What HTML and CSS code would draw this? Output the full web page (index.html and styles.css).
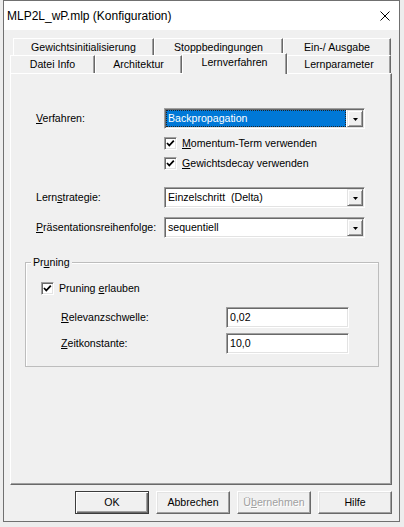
FILE: index.html
```html
<!DOCTYPE html>
<html lang="de">
<head>
<meta charset="utf-8">
<title>MLP2L_wP.mlp (Konfiguration)</title>
<link rel="stylesheet" href="styles.css">
</head>
<body>
<div class="window">
  <div class="titlebar">
    <span class="title">MLP2L_wP.mlp (Konfiguration)</span>
    <svg class="close" viewBox="0 0 10 10" width="10" height="10"><path d="M0.5 0.5 L9.5 9.5 M9.5 0.5 L0.5 9.5" stroke="#000" stroke-width="1" fill="none"/></svg>
  </div>
  <div class="content">
    <div class="tabs">
      <div class="tabrow back">
        <div class="tab t1">Gewichtsinitialisierung</div>
        <div class="tab t2">Stoppbedingungen</div>
        <div class="tab t3">Ein-/ Ausgabe</div>
      </div>
      <div class="tabrow front">
        <div class="tab t4">Datei Info</div>
        <div class="tab t5">Architektur</div>
        <div class="tab t6 sel">Lernverfahren</div>
        <div class="tab t7">Lernparameter</div>
      </div>
    </div>
    <div class="panel">
      <div class="row r1">
        <span class="lbl"><u>V</u>erfahren:</span>
        <div class="combo sunken">
          <div class="cval selected">Backpropagation</div>
          <div class="dd"><svg viewBox="0 0 5 3" width="5" height="3"><polygon points="0,0 5,0 2.5,3" fill="#000"/></svg></div>
        </div>
      </div>
      <div class="checks">
        <div class="check c1">
          <span class="box sunken"><svg viewBox="0 0 9 9" width="9" height="9"><polyline points="1,4 3.3,6.5 7.8,1.6" fill="none" stroke="#000" stroke-width="1.8"/></svg></span>
          <span><u>M</u>omentum-Term verwenden</span>
        </div>
        <div class="check c2">
          <span class="box sunken"><svg viewBox="0 0 9 9" width="9" height="9"><polyline points="1,4 3.3,6.5 7.8,1.6" fill="none" stroke="#000" stroke-width="1.8"/></svg></span>
          <span><u>G</u>ewichtsdecay verwenden</span>
        </div>
      </div>
      <div class="row r2">
        <span class="lbl">Lern<u>s</u>trategie:</span>
        <div class="combo sunken">
          <div class="cval">Einzelschritt&nbsp; (Delta)</div>
          <div class="dd"><svg viewBox="0 0 5 3" width="5" height="3"><polygon points="0,0 5,0 2.5,3" fill="#000"/></svg></div>
        </div>
      </div>
      <div class="row r3">
        <span class="lbl"><u>P</u>räsentationsreihenfolge:</span>
        <div class="combo sunken">
          <div class="cval">sequentiell</div>
          <div class="dd"><svg viewBox="0 0 5 3" width="5" height="3"><polygon points="0,0 5,0 2.5,3" fill="#000"/></svg></div>
        </div>
      </div>
      <div class="group">
        <div class="gtitle">Pr<u>u</u>ning</div>
        <div class="check gcheck">
          <span class="box sunken"><svg viewBox="0 0 9 9" width="9" height="9"><polyline points="1,4 3.3,6.5 7.8,1.6" fill="none" stroke="#000" stroke-width="1.8"/></svg></span>
          <span>Pruning <u>e</u>rlauben</span>
        </div>
        <div class="frow f1">
          <span class="flbl"><u>R</u>elevanzschwelle:</span>
          <div class="field sunken">0,02</div>
        </div>
        <div class="frow f2">
          <span class="flbl"><u>Z</u>eitkonstante:</span>
          <div class="field sunken">10,0</div>
        </div>
      </div>
    </div>
    <div class="buttons">
      <button class="btn default">OK</button>
      <button class="btn">Abbrechen</button>
      <button class="btn disabled">Ü<u>b</u>ernehmen</button>
      <button class="btn">Hilfe</button>
    </div>
  </div>
</div>
</body>
</html>
```
FILE: styles.css
```css
* { box-sizing: border-box; margin: 0; padding: 0; }
html, body { background: #ededed; }
body {
  font-family: "Liberation Sans", Arial, sans-serif;
  font-size: 10.6px;
  line-height: 13px;
  color: #000;
}
u { text-decoration: underline; text-underline-offset: 1px; }

.window {
  margin-left: 3px;
  width: 397px;
  height: 522px;
  border: 1px solid #707070;
  background: #f0f0f0;
  display: flex;
  flex-direction: column;
}
.titlebar {
  height: 29px;
  background: #fff;
  display: flex;
  align-items: center;
  justify-content: space-between;
  padding: 0 9px 0 3px;
}
.title { font-size: 12px; line-height: 14px; }
.close { display: block; }

.content {
  padding: 8px 7px 7px 6px;
  display: flex;
  flex-direction: column;
}

/* tabs */
.tabs { display: flex; flex-direction: column; }
.tabrow { display: flex; }
.tabrow.back { height: 17px; margin-left: 3px; }
.tabrow.front { height: 18px; }
.tab {
  border-left: 1px solid #fff;
  border-top: 1px solid #fff;
  border-right: 1px solid #696969;
  box-shadow: inset -1px 0 #a0a0a0;
  display: flex;
  align-items: center;
  justify-content: center;
  white-space: nowrap;
  background: #f0f0f0;
}
.t1 { width: 141px; }
.t2 { width: 129px; }
.t3 { width: 108px; }
.t4 { width: 85px; }
.t5 { width: 87px; }
.t6 { width: 105px; }
.t7 { width: 104px; }
.tab.sel {
  height: 21px;
  margin-top: -2px;
  position: relative;
  z-index: 1;
  align-items: flex-start;
  padding-top: 2px;
}

/* panel */
.panel {
  width: 382px;
  height: 412px;
  border: 1px solid;
  border-color: #fff #696969 #696969 #fff;
  box-shadow: inset -1px -1px #a0a0a0;
  padding-top: 34px;
}
.row {
  display: flex;
  align-items: center;
  height: 21px;
  padding-left: 25px;
}
.r2 { margin-top: 17px; }
.r3 { margin-top: 9px; }
.lbl { width: 128px; white-space: nowrap; }

.sunken {
  border: 1px solid;
  border-color: #a0a0a0 #fff #fff #a0a0a0;
  box-shadow: inset 1px 1px #696969, inset -1px -1px #e3e3e3;
  background: #fff;
}
.combo {
  width: 201px;
  height: 21px;
  padding: 1px;
  display: flex;
}
.cval {
  flex: 1;
  padding-left: 1px;
  border: 1px solid transparent;
  display: flex;
  align-items: center;
  white-space: nowrap;
  margin-right: 1px;
}
.cval.selected {
  background: #0078d7;
  color: #fff;
  border: 1px dotted #222;
}
.dd {
  width: 16px;
  border: 1px solid;
  border-color: #e3e3e3 #696969 #696969 #e3e3e3;
  box-shadow: inset 1px 1px #fff, inset -1px -1px #a0a0a0;
  background: #f0f0f0;
  display: flex;
  align-items: center;
  justify-content: center;
  padding-top: 1px;
}
.dd svg { display: block; }

.checks { margin-left: 153px; }
.check {
  display: flex;
  align-items: center;
  height: 13px;
  gap: 5px;
  white-space: nowrap;
}
.c1 { margin-top: 8px; }
.c2 { margin-top: 7px; }
.box {
  width: 13px;
  height: 13px;
  display: flex;
  align-items: center;
  justify-content: center;
  flex: none;
}
.box svg { display: block; }

/* group box */
.group {
  margin: 24px 0 0 14px;
  width: 354px;
  border: 1px solid #bdbdbd;
  box-shadow: inset 1px 1px #fff;
  padding-bottom: 12px;
}
.gtitle {
  margin: -7px 0 0 5px;
  padding: 0 2px;
  width: fit-content;
  background: #f0f0f0;
  line-height: 13px;
}
.gcheck { margin: 13px 0 0 15px; }
.frow {
  display: flex;
  align-items: center;
  height: 21px;
  padding-left: 35px;
}
.f1 { margin-top: 12px; }
.f2 { margin-top: 5px; }
.flbl { width: 165px; }
.field {
  width: 123px;
  height: 21px;
  padding-left: 3px;
  display: flex;
  align-items: center;
}

/* buttons */
.buttons {
  display: flex;
  justify-content: flex-end;
  gap: 7px;
  margin-top: 6px;
}
.btn {
  width: 74px;
  height: 23px;
  font: inherit;
  color: #000;
  background: #f0f0f0;
  border: 1px solid;
  border-color: #fff #696969 #696969 #fff;
  box-shadow: inset -1px -1px #a0a0a0, inset 1px 1px #e3e3e3;
  display: flex;
  align-items: center;
  justify-content: center;
}
.btn.default {
  border: 1px solid #3c3c3c;
  box-shadow: inset 1px 1px #fff, inset -1px -1px #696969, inset -2px -2px #a0a0a0;
}
.btn.disabled {
  color: #a0a0a0;
  text-shadow: 1px 1px #fff;
}
```
